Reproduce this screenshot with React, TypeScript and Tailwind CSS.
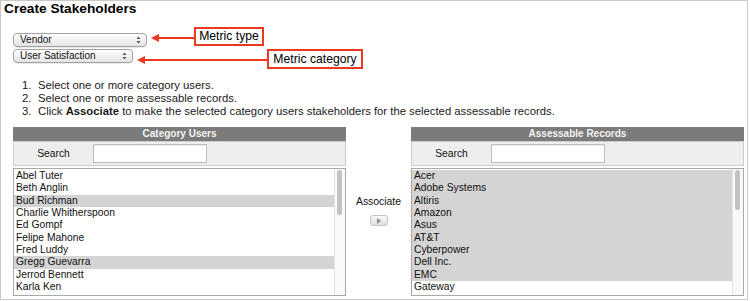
import React from "react";

type Item = { name: string; selected?: boolean };

const CATEGORY_USERS: Item[] = [
  { name: "Abel Tuter" },
  { name: "Beth Anglin" },
  { name: "Bud Richman", selected: true },
  { name: "Charlie Whitherspoon" },
  { name: "Ed Gompf" },
  { name: "Felipe Mahone" },
  { name: "Fred Luddy" },
  { name: "Gregg Guevarra", selected: true },
  { name: "Jerrod Bennett" },
  { name: "Karla Ken" },
];

const RECORDS: Item[] = [
  { name: "Acer", selected: true },
  { name: "Adobe Systems", selected: true },
  { name: "Altiris", selected: true },
  { name: "Amazon", selected: true },
  { name: "Asus", selected: true },
  { name: "AT&T", selected: true },
  { name: "Cyberpower", selected: true },
  { name: "Dell Inc.", selected: true },
  { name: "EMC", selected: true },
  { name: "Gateway" },
];

function UpDown() {
  return (
    <svg width="5" height="8" viewBox="0 0 5 8" aria-hidden="true" className="shrink-0">
      <path d="M2.5 0.5L4.5 3H0.5Z" fill="#555" />
      <path d="M2.5 7.5L4.5 5H0.5Z" fill="#555" />
    </svg>
  );
}

function PopupSelect({ label, width }: { label: string; width: string }) {
  return (
    <div
      className={`flex h-[14px] ${width} items-center justify-between rounded-[4px] border border-[#a3a3a3] bg-linear-to-b from-white to-[#e4e4e4] pl-[6px] pr-[5px] text-[10px] leading-none text-[#111] shadow-[0_1px_0_rgba(0,0,0,0.08)]`}
    >
      <span>{label}</span>
      <UpDown />
    </div>
  );
}

function Callout({ text, className }: { text: string; className: string }) {
  return (
    <div
      className={`absolute flex items-center justify-center border-2 border-[#ea3a22] bg-white text-[12.2px] leading-none text-black ${className}`}
    >
      {text}
    </div>
  );
}

function Arrow({ className, length }: { className: string; length: number }) {
  return (
    <svg width={length} height="10" viewBox={`0 0 ${length} 10`} aria-hidden="true" className={`absolute ${className}`}>
      <line x1="6" y1="5" x2={length} y2="5" stroke="#ea3a22" strokeWidth="2" />
      <path d="M0 5L8 1V9Z" fill="#ea3a22" />
    </svg>
  );
}

function Panel({ title, items, thumbHeight }: { title: string; items: Item[]; thumbHeight: string }) {
  return (
    <div className="flex w-[333px] flex-col">
      <div className="h-[14px] bg-[#7b7b7b] text-center text-[10px] font-bold leading-[14px] text-[#f4f4f4]">
        {title}
      </div>
      {/* Search row */}
      <div className="flex h-[25px] items-center border border-[#cdcdcd] bg-[#eeeeee]">
        <span className="w-[79px] text-center text-[10.3px] text-[#111]">Search</span>
        <div className="h-[19px] w-[114px] border border-[#bdbdbd] bg-white shadow-[inset_0_1px_1px_rgba(0,0,0,0.08)]" />
      </div>
      {/* List box */}
      <div className="mt-[2px] flex h-[128px] border border-[#a9a9a9] bg-white">
        <div className="flex-1 pt-[1px]">
          {items.map((item) => (
            <div
              key={item.name}
              className={`h-[12.33px] pl-[2px] text-[10.3px] leading-[12.33px] text-[#111] ${
                item.selected ? "bg-[#d4d4d4]" : ""
              }`}
            >
              {item.name}
            </div>
          ))}
        </div>
        <div className="w-[11px] border-l border-[#e4e4e4] bg-[#f9f9f9] pl-[2px] pt-[1px]">
          <div className={`w-[5px] ${thumbHeight} rounded-full bg-[#c2c2c2]`} />
        </div>
      </div>
    </div>
  );
}

export default function App() {
  return (
    <div
      className="relative h-[300px] w-[748px] overflow-hidden border border-[#c9c9c9] bg-white text-black"
      style={{ fontFamily: '"Liberation Sans", Arial, sans-serif' }}
    >
      <h1 className="pl-[3px] text-[13.7px] font-bold leading-[16px]">Create Stakeholders</h1>

      {/* Metric type / category selects */}
      <div className="mt-[16px] flex flex-col gap-[2px] pl-[12px]">
        <PopupSelect label="Vendor" width="w-[134px]" />
        <PopupSelect label="User Satisfaction" width="w-[120px]" />
      </div>

      {/* Callouts */}
      <Arrow className="left-[150px] top-[32px]" length={45} />
      <Callout text="Metric type" className="left-[193px] top-[26px] h-[19px] w-[70px]" />
      <Arrow className="left-[136px] top-[54px]" length={132} />
      <Callout text="Metric category" className="left-[266px] top-[48px] h-[20px] w-[96px]" />

      {/* Instructions */}
      <ol className="mt-[16px] pl-[21px] text-[11.3px] leading-[13px] text-[#1a1a1a]">
        <li className="flex">
          <span className="w-[16px]">1.</span>
          <span>Select one or more category users.</span>
        </li>
        <li className="flex">
          <span className="w-[16px]">2.</span>
          <span>Select one or more assessable records.</span>
        </li>
        <li className="flex">
          <span className="w-[16px]">3.</span>
          <span>
            Click <b>Associate</b> to make the selected category users stakeholders for the selected assessable
            records.
          </span>
        </li>
      </ol>

      {/* Association panels */}
      <div className="mt-[9px] flex pl-[12px]">
        <Panel title="Category Users" items={CATEGORY_USERS} thumbHeight="h-[45px]" />
        <div className="flex w-[65px] flex-col items-center pt-[68px]">
          <span className="text-[10.4px] leading-[13px] text-[#111]">Associate</span>
          <button
            type="button"
            aria-label="Associate"
            className="mt-[7px] flex h-[11px] w-[18px] items-center justify-center rounded-[3px] border border-[#c4c4c4] bg-linear-to-b from-[#fafafa] to-[#dedede]"
          >
            <svg width="4" height="6" viewBox="0 0 4 6" aria-hidden="true">
              <path d="M0 0L4 3L0 6Z" fill="#8c8c8c" />
            </svg>
          </button>
        </div>
        <Panel title="Assessable Records" items={RECORDS} thumbHeight="h-[40px]" />
      </div>
    </div>
  );
}
